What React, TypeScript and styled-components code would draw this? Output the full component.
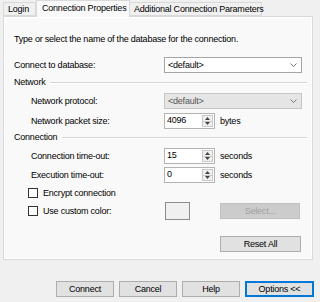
import React from "react";
import styled, { createGlobalStyle } from "styled-components";

const Global = createGlobalStyle`
  html, body { margin: 0; padding: 0; background: #f0f0f0; }
  * { box-sizing: border-box; }
`;

const Window = styled.div`
  width: 320px;
  height: 302px;
  background: #f0f0f0;
  font-family: "Liberation Sans", Arial, sans-serif;
  font-size: 9px;
  letter-spacing: -0.22px;
  color: #000;
  display: flex;
  flex-direction: column;
  overflow: hidden;
`;

const TabStrip = styled.div`
  display: flex;
  align-items: flex-end;
  height: 16px;
  padding-left: 4px;
  position: relative;
  z-index: 1;
`;

const Tab = styled.div<{ $active?: boolean; $w: number }>`
  width: ${(p) => p.$w}px;
  height: ${(p) => (p.$active ? 17 : 14)}px;
  margin-bottom: ${(p) => (p.$active ? -1 : 0)}px;
  display: flex;
  align-items: center;
  padding-left: ${(p) => (p.$active ? 5 : 4)}px;
  padding-bottom: ${(p) => (p.$active ? 2 : 0)}px;
  border: 1px solid #d9d9d9;
  border-bottom: ${(p) => (p.$active ? "none" : "1px solid #d9d9d9")};
  margin-left: ${(p) => (p.$active ? 0 : -1)}px;
  background: ${(p) => (p.$active ? "#f9f9f9" : "#f0f0f0")};
  white-space: nowrap;
`;

const Panel = styled.div`
  margin-left: 3px;
  width: 310px;
  height: 244px;
  border: 1px solid #d9d9d9;
  background: #f9f9f9;
  box-shadow: inset 0 0 0 1px #fff;
  padding: 16px 0 0 10px;
  display: flex;
  flex-direction: column;
`;

const Row = styled.div<{ $mt: number; $h: number; $indent?: number }>`
  display: flex;
  align-items: center;
  margin-top: ${(p) => p.$mt}px;
  height: ${(p) => p.$h}px;
  padding-left: ${(p) => p.$indent ?? 0}px;
  white-space: nowrap;
`;

const Label = styled.div<{ $w: number }>`
  width: ${(p) => p.$w}px;
  flex: none;
`;

const GroupTitle = styled.div`
  flex: none;
  padding-right: 5px;
`;

const Rule = styled.div`
  height: 2px;
  flex: 1;
  margin-right: 5px;
  border-top: 1px solid #d5d5d5;
  border-bottom: 1px solid #fff;
  margin-top: 1px;
`;

const Combo = styled.div<{ $disabled?: boolean }>`
  width: 138px;
  height: 16px;
  flex: none;
  display: flex;
  align-items: center;
  justify-content: space-between;
  padding: 0 4px 0 3px;
  background: ${(p) => (p.$disabled ? "#e5e5e5" : "#fff")};
  border: 1px solid ${(p) => (p.$disabled ? "#c6c6c6" : "#a5a5a5")};
  color: ${(p) => (p.$disabled ? "#555" : "#000")};
`;

const Spin = styled.div`
  width: 51px;
  height: 16px;
  flex: none;
  display: flex;
  background: #fff;
  border: 1px solid #b4b4b4;
`;

const SpinText = styled.div`
  flex: 1;
  padding-left: 2px;
  line-height: 12px;
`;

const SpinButtons = styled.div`
  width: 11px;
  margin: 1px;
  display: flex;
  flex-direction: column;
  border: 1px solid #c9c9c9;
  background: #f0f0f0;
`;

const SpinHalf = styled.div<{ $up?: boolean }>`
  flex: 1;
  display: flex;
  align-items: center;
  justify-content: center;
  border-bottom: ${(p) => (p.$up ? "1px solid #c9c9c9" : "none")};
`;

const Unit = styled.div`
  margin-left: 5px;
`;

const Check = styled.div`
  width: 10px;
  height: 10px;
  flex: none;
  border: 1px solid #333;
  background: #fff;
  margin-right: 5px;
`;

const Swatch = styled.div`
  width: 25px;
  height: 18px;
  flex: none;
  border: 1px solid #8c8c8c;
  background: #f0f0f0;
`;

const Button = styled.div<{ $w: number; $disabled?: boolean; $default?: boolean; $ml?: number }>`
  width: ${(p) => p.$w}px;
  height: 16px;
  flex: none;
  margin-left: ${(p) => p.$ml ?? 0}px;
  display: flex;
  align-items: center;
  justify-content: center;
  background: ${(p) => (p.$disabled ? "#cccccc" : "#e1e1e1")};
  border: 1px solid
    ${(p) => (p.$default ? "#0078d7" : p.$disabled ? "#bfbfbf" : "#adadad")};
  box-shadow: ${(p) => (p.$default ? "inset 0 0 0 1px #0078d7" : "none")};
  color: ${(p) => (p.$disabled ? "#a0a0a0" : "#000")};
`;

const Footer = styled.div`
  display: flex;
  justify-content: flex-end;
  gap: 5px;
  padding-right: 6px;
  margin-top: 21px;
`;

const Chevron = () => (
  <svg width="7" height="4" viewBox="0 0 7 4">
    <path d="M0.5 0.5 L3.5 3.5 L6.5 0.5" fill="none" stroke="#777" strokeWidth="1" />
  </svg>
);

const Tri = ({ up }: { up?: boolean }) => (
  <svg width="5" height="3" viewBox="0 0 5 3">
    <path d={up ? "M0 3 L2.5 0 L5 3 Z" : "M0 0 L2.5 3 L5 0 Z"} fill="#444" />
  </svg>
);

const SpinBox = ({ value }: { value: string }) => (
  <Spin>
    <SpinText>{value}</SpinText>
    <SpinButtons>
      <SpinHalf $up>
        <Tri up />
      </SpinHalf>
      <SpinHalf>
        <Tri />
      </SpinHalf>
    </SpinButtons>
  </Spin>
);

export default function App() {
  return (
    <Window>
      <Global />
      <TabStrip>
        <Tab $w={33}>Login</Tab>
        <Tab $w={94} $active>
          Connection Properties
        </Tab>
        <Tab $w={133}>Additional Connection Parameters</Tab>
      </TabStrip>
      <Panel>
        <Row $mt={0} $h={12}>
          Type or select the name of the database for the connection.
        </Row>
        <Row $mt={12} $h={16}>
          <Label $w={150}>Connect to database:</Label>
          <Combo>
            <span>&lt;default&gt;</span>
            <Chevron />
          </Combo>
        </Row>
        <Row $mt={3} $h={12}>
          <GroupTitle>Network</GroupTitle>
          <Rule />
        </Row>
        <Row $mt={5} $h={16} $indent={17}>
          <Label $w={133}>Network protocol:</Label>
          <Combo $disabled>
            <span>&lt;default&gt;</span>
            <Chevron />
          </Combo>
        </Row>
        <Row $mt={4} $h={16} $indent={17}>
          <Label $w={133}>Network packet size:</Label>
          <SpinBox value="4096" />
          <Unit>bytes</Unit>
        </Row>
        <Row $mt={2} $h={12}>
          <GroupTitle>Connection</GroupTitle>
          <Rule />
        </Row>
        <Row $mt={5} $h={16} $indent={17}>
          <Label $w={133}>Connection time-out:</Label>
          <SpinBox value="15" />
          <Unit>seconds</Unit>
        </Row>
        <Row $mt={3} $h={16} $indent={17}>
          <Label $w={133}>Execution time-out:</Label>
          <SpinBox value="0" />
          <Unit>seconds</Unit>
        </Row>
        <Row $mt={4} $h={12} $indent={14}>
          <Check />
          Encrypt connection
        </Row>
        <Row $mt={3} $h={18} $indent={14}>
          <Check />
          <Label $w={122}>Use custom color:</Label>
          <Swatch />
          <Button $w={80} $disabled $ml={30}>
            Select...
          </Button>
        </Row>
        <Row $mt={16} $h={16} $indent={206}>
          <Button $w={81}>Reset All</Button>
        </Row>
      </Panel>
      <Footer>
        <Button $w={58}>Connect</Button>
        <Button $w={58}>Cancel</Button>
        <Button $w={58}>Help</Button>
        <Button $w={69} $default>
          Options &lt;&lt;
        </Button>
      </Footer>
    </Window>
  );
}
